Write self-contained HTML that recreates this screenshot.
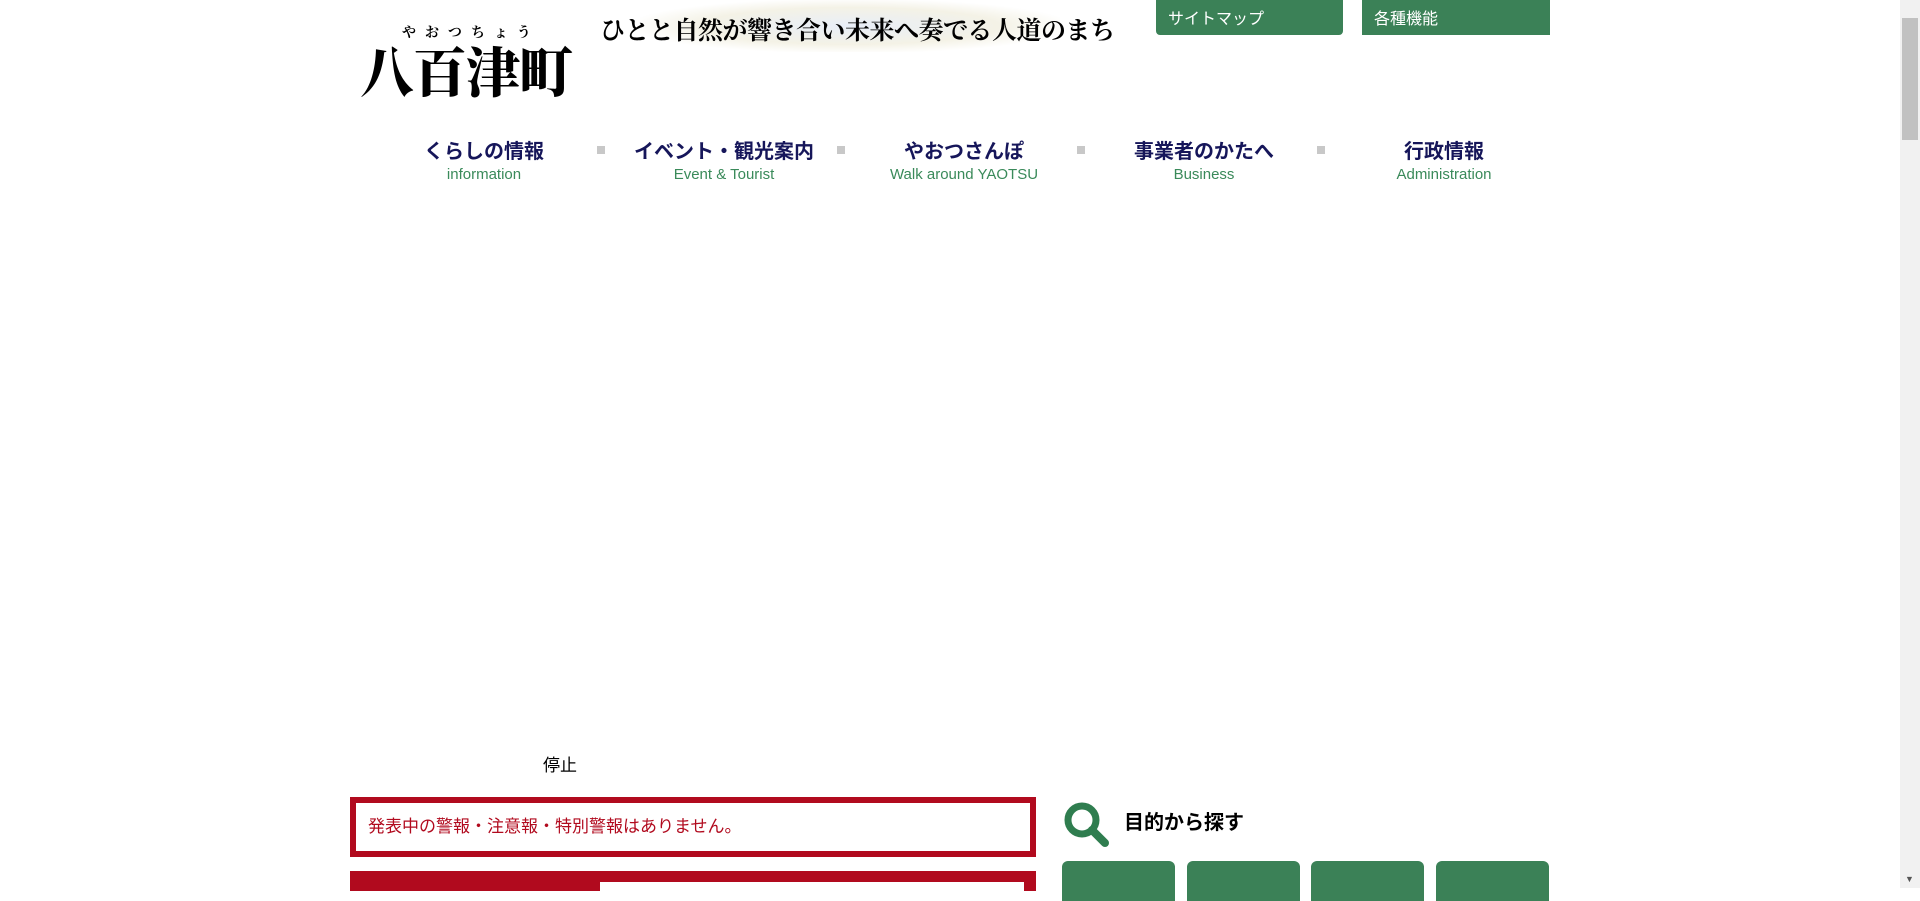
<!DOCTYPE html>
<html><head><meta charset="utf-8"><style>
*{margin:0;padding:0;box-sizing:border-box}
body{width:1920px;height:888px;overflow:hidden;background:#fff;position:relative;font-family:"Liberation Sans","Noto Sans CJK JP",sans-serif}
.a{position:absolute}
.btn{background:#3b8157;color:#fff;font-size:16px;padding:5px 12px;border-radius:0 0 4px 4px;height:35px}
.nav{position:absolute;top:139px;width:240px;text-align:center;margin-left:-120px}
.nav b{display:block;color:#16165a;font-size:20px;font-weight:bold;line-height:26px}
.nav span{display:block;color:#3a8a5a;font-size:15px;line-height:20px}
.sep{position:absolute;top:146px;width:8px;height:8px;background:#c8c8c8}
.g{position:absolute;top:861px;height:40px;width:113px;background:#3b8157;border-radius:6px 6px 0 0}
</style></head><body>
<div class="a" style="left:402px;top:22px;font-size:14px;letter-spacing:9px;font-family:'Noto Serif CJK SC',serif;font-weight:bold">やおつちょう</div>
<div class="a" style="left:360px;top:38px;font-size:54px;font-family:'Noto Serif CJK SC',serif;font-weight:900;line-height:64px;letter-spacing:-1px">八百津町</div>
<div class="a" style="left:640px;top:0;width:420px;height:52px;background:radial-gradient(ellipse at center,#e8eef8 0%,#f4f2e6 50%,#fff 75%)"></div>
<div class="a" style="left:600px;top:11px;font-size:25px;font-weight:bold;font-family:'Noto Serif CJK SC',serif;line-height:36px;letter-spacing:-0.5px">ひとと自然が響き合い未来へ奏でる人道のまち</div>
<div class="a btn" style="left:1156px;top:0;width:187px">サイトマップ</div>
<div class="a btn" style="left:1362px;top:0;width:188px;border-radius:0">各種機能</div>
<div class="nav" style="left:484px"><b>くらしの情報</b><span>information</span></div>
<div class="nav" style="left:724px"><b>イベント・観光案内</b><span>Event &amp; Tourist</span></div>
<div class="nav" style="left:964px"><b>やおつさんぽ</b><span>Walk around YAOTSU</span></div>
<div class="nav" style="left:1204px"><b>事業者のかたへ</b><span>Business</span></div>
<div class="nav" style="left:1444px"><b>行政情報</b><span>Administration</span></div>
<div class="sep" style="left:597px"></div><div class="sep" style="left:837px"></div><div class="sep" style="left:1077px"></div><div class="sep" style="left:1317px"></div>
<div class="a" style="left:543px;top:751px;font-size:17px">停止</div>
<div class="a" style="left:350px;top:797px;width:686px;height:60px;border:6px solid #b10a1e;padding:9px 12px;color:#b10a1e;font-size:17px">発表中の警報・注意報・特別警報はありません。</div>
<div class="a" style="left:350px;top:871px;width:686px;height:20px;background:#b10a1e"></div>
<div class="a" style="left:600px;top:882px;width:424px;height:10px;background:#fff"></div>
<svg class="a" style="left:1062px;top:800px" width="48" height="48" viewBox="0 0 48 48"><circle cx="20" cy="20" r="14" fill="none" stroke="#2f7d4f" stroke-width="7"/><line x1="30" y1="30" x2="43" y2="43" stroke="#2f7d4f" stroke-width="8" stroke-linecap="round"/></svg>
<div class="a" style="left:1124px;top:806px;font-size:20px;font-weight:bold">目的から探す</div>
<div class="g" style="left:1062px"></div><div class="g" style="left:1187px"></div><div class="g" style="left:1311px"></div><div class="g" style="left:1436px"></div>
<div class="a" style="left:1900px;top:0;width:20px;height:888px;background:#f1f1f1"></div>
<div class="a" style="left:1902px;top:18px;width:16px;height:122px;background:#c1c1c1"></div>
<div class="a" style="left:1905px;top:874px;font-size:9px;color:#555">▼</div>
</body></html>
